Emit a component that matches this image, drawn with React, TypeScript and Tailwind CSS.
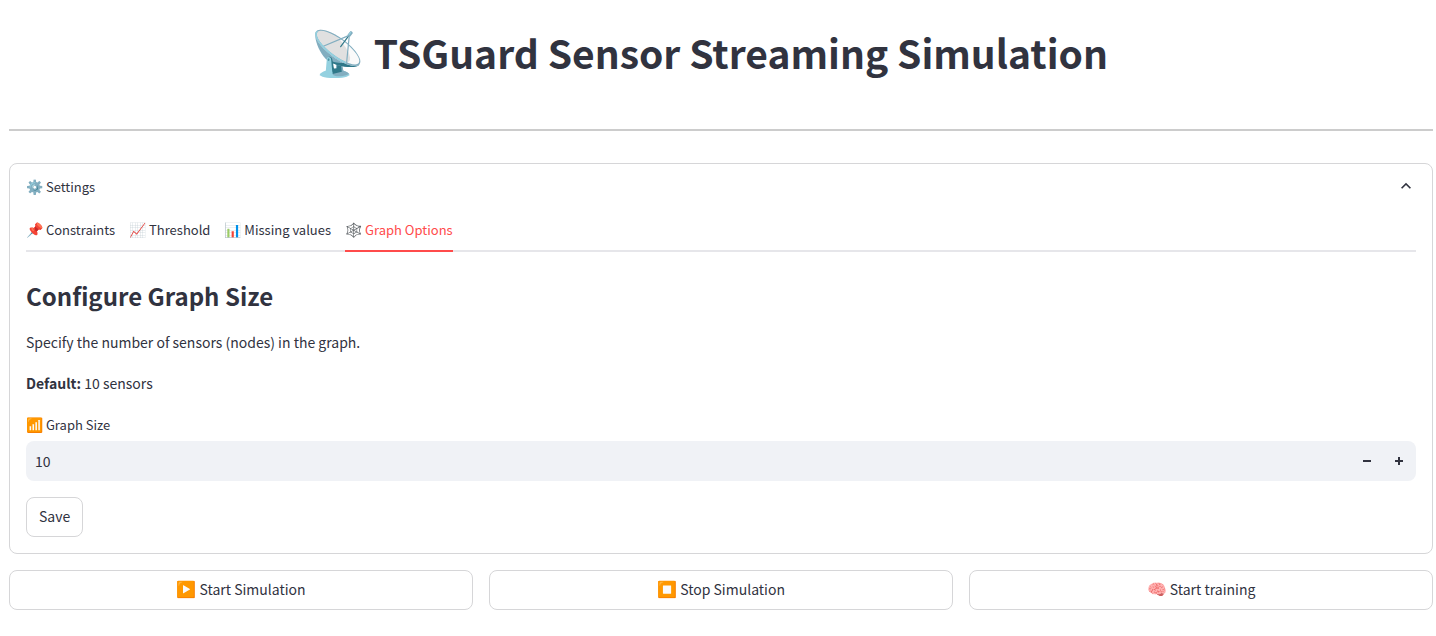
import { useState } from "react";

const tabs = [
  { icon: "📌", label: "Constraints" },
  { icon: "📈", label: "Threshold" },
  { icon: "📊", label: "Missing values" },
  { icon: "🕸️", label: "Graph Options" },
];

const actions = [
  { icon: "▶️", label: "Start Simulation" },
  { icon: "⏹️", label: "Stop Simulation" },
  { icon: "🧠", label: "Start training" },
];

export default function App() {
  const [active, setActive] = useState(3);
  const [size, setSize] = useState(10);
  return (
    <main className="bg-white pt-[22px] pr-[3px] pb-6 pl-[9px] font-['Noto_Sans_CJK_SC',sans-serif] text-sm text-[#31333f]">
      <h1 className="pr-6 text-center text-[39px] leading-[60px] font-bold">
        <span className="text-[44px] leading-none">📡</span> TSGuard Sensor Streaming Simulation
      </h1>
      <hr className="mt-[47px] border-t-2 border-[#ccc]" />
      <section className="mt-8 rounded-lg border border-[#d6d6d8] px-4 pb-4">
        <button type="button" className="flex h-12 w-full items-center justify-between pb-0.5 text-[13px]">
          <span>
            <span className="text-sm leading-none">⚙️</span> Settings
          </span>
          <svg className="mb-0.5 h-5 w-5" viewBox="0 0 24 24" fill="currentColor" aria-hidden="true">
            <path d="M12 8l-6 6 1.410 1.410L12 10.830l4.590 4.580L18 14z" />
          </svg>
        </button>
        <div role="tablist" className="flex h-10 gap-3.5 border-b-2 border-[#e6e6ea]">
          {tabs.map((t, i) => (
            <button
              key={t.label}
              type="button"
              role="tab"
              aria-selected={i === active}
              onClick={() => setActive(i)}
              className={
                i === active
                  ? "-mb-0.5 h-10 border-b-2 border-[#ff4b4b] pb-0.5 text-[13px] text-[#ff4b4b]"
                  : "-mb-0.5 h-10 border-b-2 border-transparent pb-0.5 text-[13px]"
              }
            >
              <span className="text-sm leading-none">{t.icon}</span> {t.label}
            </button>
          ))}
        </div>
        <h2 className="mt-[26px] text-2xl leading-9 font-semibold">Configure Graph Size</h2>
        <p className="mt-4 leading-[25px]">Specify the number of sensors (nodes) in the graph.</p>
        <p className="mt-4 leading-[25px]">
          <strong className="font-bold">Default:</strong> 10 sensors
        </p>
        <label htmlFor="graph-size" className="mt-4 block text-[13px] leading-[25px]">
          <span className="text-sm leading-none">📶</span> Graph Size
        </label>
        <div className="mt-1 flex h-10 items-center rounded-lg bg-[#f0f2f6] pr-px">
          <input
            id="graph-size"
            inputMode="numeric"
            value={size}
            onChange={(e) => setSize(Number(e.target.value) || 0)}
            className="h-10 min-w-0 flex-1 bg-transparent pl-[9px] outline-none"
          />
          <button type="button" aria-label="Decrease" onClick={() => setSize(size - 1)} className="flex h-10 w-8 items-center justify-center">
            <svg className="h-2 w-2" viewBox="0 0 8 8" fill="currentColor"><path d="M0 3h8v2H0z" /></svg>
          </button>
          <button type="button" aria-label="Increase" onClick={() => setSize(size + 1)} className="flex h-10 w-8 items-center justify-center">
            <svg className="h-2 w-2" viewBox="0 0 8 8" fill="currentColor"><path d="M0 3h3V0h2v3h3v2H5v3H3V5H0z" /></svg>
          </button>
        </div>
        <button type="button" className="mt-4 h-10 rounded-lg border border-[#d6d6d8] px-3 pb-0.5">Save</button>
      </section>
      <div className="mt-4 grid grid-cols-3 gap-4">
        {actions.map((a) => (
          <button key={a.label} type="button" className="h-10 rounded-lg border border-[#d6d6d8] pb-0.5">
            <span className="text-base leading-none">{a.icon}</span> {a.label}
          </button>
        ))}
      </div>
    </main>
  );
}
